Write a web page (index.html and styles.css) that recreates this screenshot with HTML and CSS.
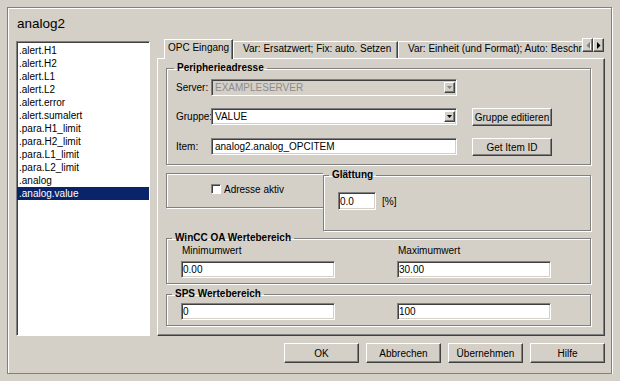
FILE: index.html
```html
<!DOCTYPE html>
<html lang="de">
<head>
    <meta charset="UTF-8">
    <meta name="viewport" content="width=device-width, initial-scale=1.0">
    <title>analog2</title>
    <link rel="stylesheet" href="styles.css">
</head>
<body>
    <div class="dialog">
        <div class="title">analog2</div>
        <div class="main">
            <ul class="listbox">
                <li>.alert.H1</li>
                <li>.alert.H2</li>
                <li>.alert.L1</li>
                <li>.alert.L2</li>
                <li>.alert.error</li>
                <li>.alert.sumalert</li>
                <li>.para.H1_limit</li>
                <li>.para.H2_limit</li>
                <li>.para.L1_limit</li>
                <li>.para.L2_limit</li>
                <li>.analog</li>
                <li class="selected">.analog.value</li>
            </ul>
            <div class="tabctl">
                <div class="tabstrip">
                    <div class="tab active tab-opc">OPC Eingang</div>
                    <div class="tab tab-ersatz">Var: Ersatzwert; Fix: auto. Setzen</div>
                    <div class="tab tab-einheit">Var: Einheit (und Format); Auto: Beschre</div>
                </div>
                <div class="tabscroll">
                    <span class="scrollbtn"><svg width="4" height="7" viewBox="0 0 4 7"><polygon points="4,0 4,7 0.5,3.5" fill="#808080"/></svg></span>
                    <span class="scrollbtn"><svg width="4" height="7" viewBox="0 0 4 7"><polygon points="0,0 0,7 3.5,3.5" fill="#000"/></svg></span>
                </div>
                <div class="panel">
                    <fieldset class="group group-periph">
                        <legend>Peripherieadresse</legend>
                        <div class="periph-body">
                            <div class="field-row">
                                <span class="field-label">Server:</span>
                                <div class="combo disabled">
                                    <span class="combo-text">EXAMPLESERVER</span>
                                    <span class="combo-btn"><svg width="5" height="3" viewBox="0 0 5 3"><polygon points="0,0 5,0 2.5,3" fill="#808080"/></svg></span>
                                </div>
                            </div>
                            <div class="field-row row-gruppe">
                                <span class="field-label">Gruppe:</span>
                                <div class="combo">
                                    <span class="combo-text">VALUE</span>
                                    <span class="combo-btn"><svg width="5" height="3" viewBox="0 0 5 3"><polygon points="0,0 5,0 2.5,3" fill="#000"/></svg></span>
                                </div>
                                <button class="btn side-btn">Gruppe editieren</button>
                            </div>
                            <div class="field-row row-item">
                                <span class="field-label">Item:</span>
                                <input class="edit item-edit" type="text" value="analog2.analog_OPCITEM">
                                <button class="btn side-btn">Get Item ID</button>
                            </div>
                        </div>
                    </fieldset>

                    <div class="row-mid">
                        <div class="addr-box">
                            <span class="checkbox"></span>
                            <span>Adresse aktiv</span>
                        </div>
                        <fieldset class="group group-glatt">
                            <legend>Glättung</legend>
                            <div class="glatt-body">
                                <input class="edit glatt-edit" type="text" value="0.0">
                                <span class="unit">[%]</span>
                            </div>
                        </fieldset>
                    </div>

                    <fieldset class="group group-range">
                        <legend>WinCC OA Wertebereich</legend>
                        <div class="range-body">
                            <span class="range-label">Minimumwert</span>
                            <span class="range-label">Maximumwert</span>
                            <input class="edit range-edit" type="text" value="0.00">
                            <input class="edit range-edit" type="text" value="30.00">
                        </div>
                    </fieldset>

                    <fieldset class="group group-sps">
                        <legend>SPS Wertebereich</legend>
                        <div class="range-body sps-body">
                            <input class="edit range-edit" type="text" value="0">
                            <input class="edit range-edit" type="text" value="100">
                        </div>
                    </fieldset>
                </div>
            </div>
        </div>
        <div class="buttons">
            <button class="btn dlg-btn">OK</button>
            <button class="btn dlg-btn">Abbrechen</button>
            <button class="btn dlg-btn">Übernehmen</button>
            <button class="btn dlg-btn">Hilfe</button>
        </div>
    </div>
</body>
</html>
```

FILE: styles.css
```css
body {
    margin: 0;
    background: #d4d0c8;
    font-family: "Liberation Sans", Arial, sans-serif;
    font-size: 10px;
    color: #000;
    overflow: hidden;
}
.dialog {
    box-sizing: border-box;
    width: 605px;
    height: 367px;
    margin: 7px 0 0 7px;
    border: 1px solid #808080;
    box-shadow: inset 1px 1px #fff, 1px 1px #fff;
}
.title {
    padding: 8px 0 0 9px;
    font-size: 13.5px;
    line-height: 16px;
}
.main {
    display: flex;
    gap: 7px;
    height: 295px;
    margin-top: 9px;
    padding: 0 6px 0 8px;
}

/* list of elements */
.listbox {
    box-sizing: border-box;
    width: 134px;
    height: 100%;
    margin: 0;
    padding: 2px 0 0 0;
    list-style: none;
    background: #fff;
    border: 1px solid;
    border-color: #808080 #fff #fff #808080;
    box-shadow: inset 1px 1px #404040;
}
.listbox li {
    line-height: 13px;
    padding-left: 2px;
    white-space: nowrap;
}
.listbox li.selected {
    background: #0a246a;
    color: #fff;
}

/* tab control */
.tabctl {
    position: relative;
    width: 448px;
    display: flex;
    flex-direction: column;
}
.tabstrip {
    display: flex;
    align-items: flex-end;
    height: 17px;
    padding-left: 7px;
}
.tab {
    box-sizing: border-box;
    height: 17px;
    padding: 1px 0 0 9px;
    border: 1px solid;
    border-bottom: none;
    border-color: #fff #404040 transparent #fff;
    box-shadow: inset -1px 0 #808080;
    background: #d4d0c8;
    line-height: 12px;
    white-space: nowrap;
    overflow: hidden;
}
.tab.active {
    position: relative;
    z-index: 1;
    height: 20px;
    margin-bottom: -1px;
    padding: 2px 0 0 3px;
}
.tab-opc {
    width: 69px;
}
.tab-ersatz {
    width: 165px;
}
.tab-einheit {
    width: 190px;
    border-right: none;
    box-shadow: none;
}
.tabscroll {
    position: absolute;
    top: -3px;
    left: 425px;
    z-index: 2;
    display: flex;
}
.scrollbtn {
    box-sizing: border-box;
    width: 11px;
    height: 14px;
    display: flex;
    align-items: center;
    justify-content: center;
    background: #d4d0c8;
    border: 1px solid;
    border-color: #fff #404040 #404040 #fff;
    box-shadow: inset -1px -1px #808080;
}
.scrollbtn:first-child svg {
    filter: drop-shadow(1px 1px 0 #fff);
}
.panel {
    flex: 1;
    box-sizing: border-box;
    padding: 3px 13px 0 8px;
    border: 1px solid;
    border-color: #fff #404040 #404040 #fff;
    box-shadow: inset -1px -1px #808080;
}

/* group boxes */
.group {
    margin: 0;
    padding: 0;
    min-width: 0;
    border: 1px solid #808080;
    box-shadow: inset 1px 1px #fff, 1px 1px #fff;
}
.group legend {
    margin-left: 5px;
    padding: 0 3px;
    font-weight: bold;
    line-height: 12px;
}
.group-periph legend {
    margin-left: 7px;
}
.periph-body {
    padding: 5px 0 8px 9px;
}
.field-row {
    display: flex;
    align-items: flex-start;
    height: 18px;
}
.row-gruppe {
    margin-top: 11px;
}
.row-item {
    margin-top: 12px;
}
.field-label {
    width: 35px;
    line-height: 17px;
}
.combo {
    box-sizing: border-box;
    width: 246px;
    height: 17px;
    display: flex;
    align-items: center;
    background: #fff;
    border: 1px solid;
    border-color: #808080 #fff #fff #808080;
    box-shadow: inset 1px 1px #404040, inset -1px -1px #d4d0c8;
}
.combo.disabled {
    background: #d4d0c8;
    color: #8c8c8c;
}
.combo-text {
    flex: 1;
    padding-left: 3px;
}
.combo-btn {
    box-sizing: border-box;
    width: 11px;
    height: 11px;
    margin-right: 1px;
    display: flex;
    align-items: center;
    justify-content: center;
    background: #d4d0c8;
    border: 1px solid;
    border-color: #fff #404040 #404040 #fff;
    box-shadow: inset -1px -1px #808080;
}
.edit {
    box-sizing: border-box;
    height: 17px;
    margin: 0;
    padding: 0 0 0 1px;
    font: inherit;
    color: #000;
    background: #fff;
    border: 1px solid;
    border-color: #808080 #fff #fff #808080;
    box-shadow: inset 1px 1px #404040, inset -1px -1px #d4d0c8;
    outline: none;
}
.item-edit {
    width: 246px;
    padding-left: 3px;
}
.btn {
    box-sizing: border-box;
    margin: 0;
    padding: 0;
    font: inherit;
    color: #000;
    background: #d4d0c8;
    border: 1px solid;
    border-color: #fff #404040 #404040 #fff;
    box-shadow: inset -1px -1px #808080;
}
.side-btn {
    width: 80px;
    height: 18px;
    margin-left: 15px;
}

/* Adresse aktiv / Glättung */
.row-mid {
    display: flex;
    align-items: flex-start;
    margin-top: 4px;
}
.addr-box {
    box-sizing: border-box;
    width: 157px;
    height: 35px;
    margin-top: 4px;
    display: flex;
    align-items: center;
    justify-content: center;
    padding: 0 0 3px 5px;
    border: 1px solid #808080;
    border-right: none;
    box-shadow: inset 1px 1px #fff, 1px 1px #fff;
}
.checkbox {
    box-sizing: border-box;
    width: 10px;
    height: 10px;
    margin-right: 3px;
    background: #fff;
    border: 1px solid;
    border-color: #808080 #fff #fff #808080;
    box-shadow: inset 1px 1px #404040;
}
.group-glatt {
    flex: 1;
}
.glatt-body {
    display: flex;
    align-items: center;
    padding: 11px 0 20px 14px;
}
.glatt-edit {
    width: 38px;
    height: 18px;
}
.unit {
    margin-left: 6px;
}

/* value ranges */
.group-range {
    margin-top: 1px;
}
.group-sps {
    margin-top: 4px;
}
.range-body {
    display: grid;
    grid-template-columns: 216px 154px;
    row-gap: 4px;
    padding: 1px 0 5px 14px;
}
.sps-body {
    padding-top: 3px;
}
.range-label {
    padding-left: 1px;
    line-height: 12px;
}
.range-edit {
    width: 154px;
}

/* dialog buttons */
.buttons {
    display: flex;
    justify-content: flex-end;
    gap: 7px;
    margin-top: 7px;
    padding-right: 6px;
}
.dlg-btn {
    width: 75px;
    height: 20px;
}
```
